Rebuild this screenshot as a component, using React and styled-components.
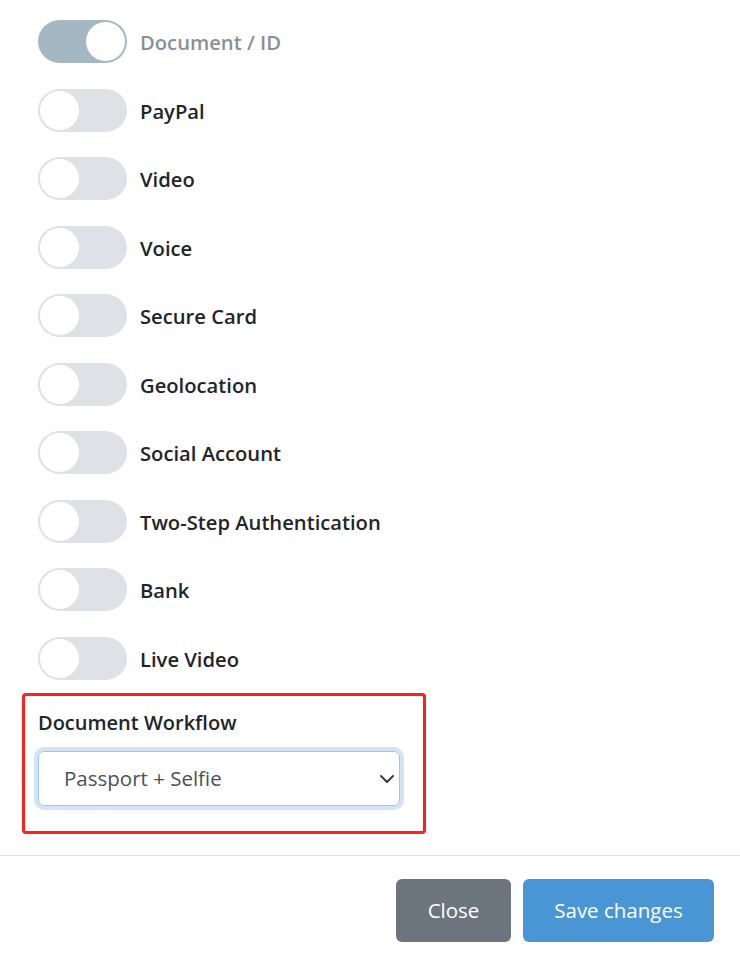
import styled, { createGlobalStyle } from 'styled-components';

const GlobalStyle = createGlobalStyle`
  body {
    margin: 0;
    background: #fff;
    font-family: "Open Sans", "Noto Sans", sans-serif;
    color: #212529;
  }
`;

const Page = styled.div`
  width: 740px;
  height: 959px;
  display: flex;
  flex-direction: column;
  overflow: hidden;
`;

const Body = styled.div`
  padding: 20px 0 0 22px;
  display: flex;
  flex-direction: column;
`;

const SwitchList = styled.div`
  display: flex;
  flex-direction: column;
  gap: 25.5px;
  padding-left: 16px;
`;

const SwitchRow = styled.label`
  display: flex;
  align-items: center;
  gap: 13px;
  height: 43px;
`;

const Track = styled.span`
  position: relative;
  flex: none;
  width: 89px;
  height: 43px;
  border-radius: 22px;
  background: ${(p) => (p.$on ? '#a4b8c4' : '#dee2e6')};
`;

const Knob = styled.span`
  position: absolute;
  top: 2px;
  left: ${(p) => (p.$on ? '48px' : '2px')};
  width: 39px;
  height: 39px;
  border-radius: 50%;
  background: #fff;
`;

const SwitchLabel = styled.span`
  padding-top: 1px;
  font-size: 20.2px;
  font-weight: 600;
  color: ${(p) => (p.$on ? '#8a9097' : '#212529')};
`;

const Highlight = styled.div`
  box-sizing: border-box;
  margin-top: 13px;
  width: 404px;
  border: 3px solid #ff1f1f;
  border-radius: 4px;
  padding: 14px 0 25px 13px;
`;

const FieldLabel = styled.div`
  font-size: 20px;
  font-weight: 600;
  line-height: 26px;
  margin-bottom: 15px;
`;

const SelectBox = styled.div`
  position: relative;
  box-sizing: border-box;
  width: 362px;
  height: 55px;
  border: 1px solid #9ec5ea;
  border-radius: 6px;
  box-shadow: 0 0 0 4px #d3e5f5;
  display: flex;
  align-items: center;
  padding-left: 25px;
  font-size: 20.5px;
  color: #495057;
`;

const Chevron = styled.svg`
  position: absolute;
  right: 4px;
  top: 21px;
`;

const Divider = styled.div`
  margin-top: 21px;
  height: 1px;
  background: #dee2e6;
`;

const Footer = styled.div`
  display: flex;
  justify-content: flex-end;
  gap: 12px;
  padding: 23px 26px 0 0;
`;

const Button = styled.button`
  height: 63px;
  border: none;
  border-radius: 6px;
  padding: 0;
  font-family: "Open Sans", "Noto Sans", sans-serif;
  font-size: 20.5px;
  color: #fff;
  background: ${(p) => (p.$primary ? '#4a96d5' : '#6c757d')};
  width: ${(p) => (p.$primary ? '191px' : '115px')};
  cursor: pointer;
`;

const options = [
  { name: 'Document / ID', on: true },
  { name: 'PayPal' },
  { name: 'Video' },
  { name: 'Voice' },
  { name: 'Secure Card' },
  { name: 'Geolocation' },
  { name: 'Social Account' },
  { name: 'Two-Step Authentication' },
  { name: 'Bank' },
  { name: 'Live Video' },
];

export default function App() {
  return (
    <Page>
      <GlobalStyle />
      <Body>
        <SwitchList>
          {options.map((o) => (
            <SwitchRow key={o.name}>
              <Track $on={o.on}>
                <Knob $on={o.on} />
              </Track>
              <SwitchLabel $on={o.on}>{o.name}</SwitchLabel>
            </SwitchRow>
          ))}
        </SwitchList>
        <Highlight>
          <FieldLabel>Document Workflow</FieldLabel>
          <SelectBox>
            Passport + Selfie
            <Chevron width="16" height="12" viewBox="0 0 16 12">
              <polyline points="2,3 8,9 14,3" fill="none" stroke="#343a40" strokeWidth="2" strokeLinecap="round" strokeLinejoin="round" />
            </Chevron>
          </SelectBox>
        </Highlight>
      </Body>
      <Divider />
      <Footer>
        <Button>Close</Button>
        <Button $primary>Save changes</Button>
      </Footer>
    </Page>
  );
}
